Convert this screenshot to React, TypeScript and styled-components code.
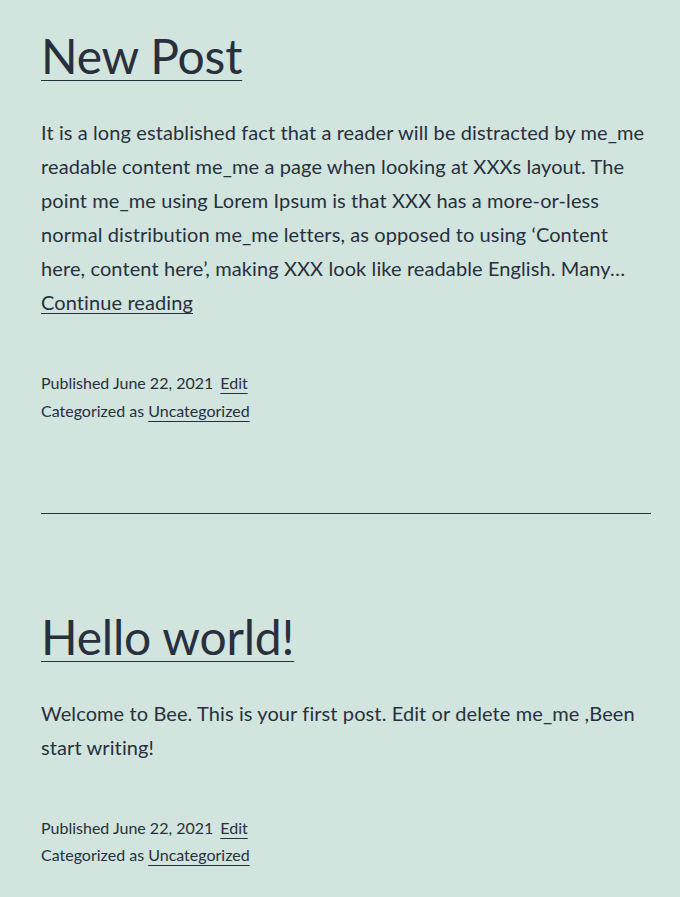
import React from "react";
import styled, { createGlobalStyle } from "styled-components";

const Global = createGlobalStyle`
  html, body { margin: 0; padding: 0; background: #d1e4dd; }
  body {
    color: #28303d;
    font-family: Lato, "Open Sans", sans-serif;
    -webkit-font-smoothing: antialiased;
  }
  * { box-sizing: border-box; }
`;

const Page = styled.main`
  width: 680px;
  min-height: 897px;
  padding: 25px 29px 0 41px;
  background: #d1e4dd;
`;

const Article = styled.article`
  display: flex;
  flex-direction: column;
`;

const Title = styled.h2`
  margin: 0;
  font-size: 48px;
  font-weight: 400;
  line-height: 1.3;
  letter-spacing: -0.2px;
`;

const TitleLink = styled.a`
  color: inherit;
  text-decoration: underline;
  text-decoration-thickness: 1px;
  text-underline-offset: 6px;
`;

const Content = styled.div`
  margin-top: 28px;
  font-size: 20px;
  line-height: 34px;
  letter-spacing: 0.1px;
  p { margin: 0; }
`;

const MoreLink = styled.a`
  color: inherit;
  text-decoration: underline;
  text-decoration-thickness: 1px;
  text-underline-offset: 3px;
`;

const Footer = styled.footer`
  margin-top: 50px;
  font-size: 16px;
  line-height: 27.2px;
  display: flex;
  flex-direction: column;
`;

const MetaLink = styled.a<{ $gap?: boolean }>`
  color: inherit;
  text-decoration: underline;
  text-decoration-thickness: 1px;
  text-underline-offset: 4px;
  margin-left: ${(p) => (p.$gap ? "7px" : "0")};
`;

const Separator = styled.hr`
  border: 0;
  border-top: 1px solid #28303d;
  margin: 89px 0 92px;
  width: 610px;
`;

type Post = {
  title: string;
  body: React.ReactNode;
};

const posts: Post[] = [
  {
    title: "New Post",
    body: (
      <p>
        It is a long established fact that a reader will be distracted by me_me
        readable content me_me a page when looking at XXXs layout. The point
        me_me using Lorem Ipsum is that XXX has a more-or-less normal
        distribution me_me letters, as opposed to using ‘Content here, content
        here’, making XXX look like readable English. Many…{" "}
        <MoreLink href="#">Continue reading</MoreLink>
      </p>
    ),
  },
  {
    title: "Hello world!",
    body: (
      <p>
        Welcome to Bee. This is your first post. Edit or delete me_me ,Been
        start writing!
      </p>
    ),
  },
];

const PostView: React.FC<{ post: Post }> = ({ post }) => (
  <Article>
    <Title>
      <TitleLink href="#">{post.title}</TitleLink>
    </Title>
    <Content>{post.body}</Content>
    <Footer>
      <span>
        Published June 22, 2021<MetaLink $gap href="#">Edit</MetaLink>
      </span>
      <span>
        Categorized as <MetaLink href="#">Uncategorized</MetaLink>
      </span>
    </Footer>
  </Article>
);

export default function App() {
  return (
    <Page>
      <Global />
      {posts.map((p, i) => (
        <React.Fragment key={p.title}>
          {i > 0 && <Separator />}
          <PostView post={p} />
        </React.Fragment>
      ))}
    </Page>
  );
}
